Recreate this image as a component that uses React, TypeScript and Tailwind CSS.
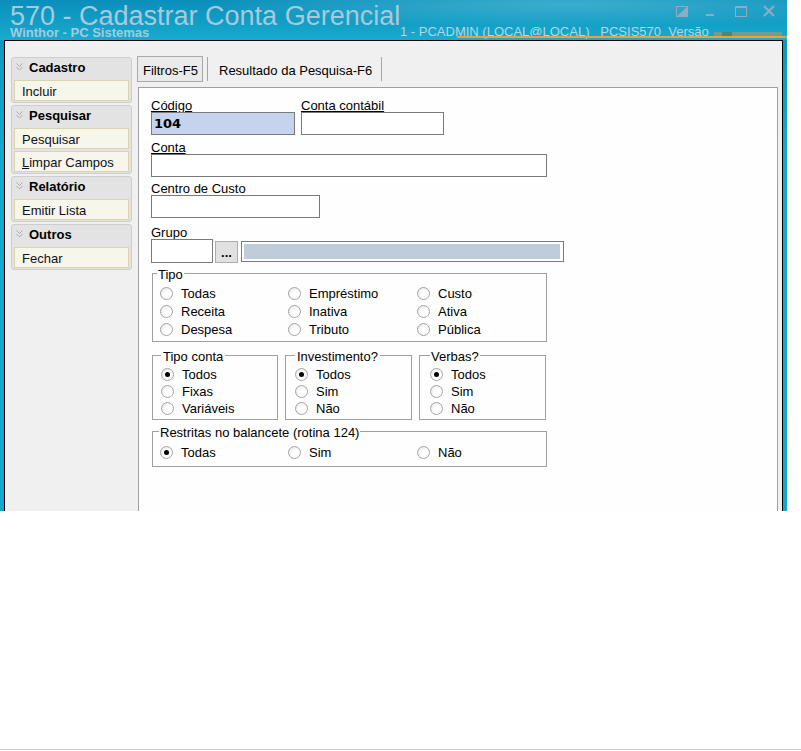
import type { ReactNode } from 'react'

// Window chrome + "Cadastrar Conta Gerencial" filter form (Winthor rotina 570)

const UI = "font-['Liberation_Sans',Arial,sans-serif]"

function Radio({ label, checked = false }: { label: string; checked?: boolean }) {
    return (
        <div className="flex items-center gap-[8px] h-full leading-[15px]">
            <span className="w-[13px] h-[13px] shrink-0 rounded-full border border-[#a4a4a4] bg-[radial-gradient(circle_at_65%_65%,#ffffff_35%,#e2e2e2_100%)] flex items-center justify-center">
                {checked && <span className="w-[5px] h-[5px] rounded-full bg-black" />}
            </span>
            <span className="whitespace-nowrap">{label}</span>
        </div>
    )
}

function GroupBox({
    title,
    className,
    legendClass,
    children,
}: {
    title: string
    className: string
    legendClass: string
    children: ReactNode
}) {
    return (
        <fieldset className={`border border-[#a0a0a0] ${className}`}>
            <legend className={`pt-[3px] leading-[14px] whitespace-nowrap ${legendClass}`}>{title}</legend>
            {children}
        </fieldset>
    )
}

function LabeledInput({
    label,
    width,
    underline = false,
    highlight = false,
    value,
    height = 'h-[23px]',
}: {
    label: string
    width: string
    underline?: boolean
    highlight?: boolean
    value?: string
    height?: string
}) {
    return (
        <div className="flex flex-col">
            <div className={`h-[13px] leading-[13px] overflow-hidden whitespace-nowrap ${underline ? 'underline underline-offset-[1px]' : ''}`}>
                {label}
            </div>
            <div
                className={`${width} ${height} border border-[#7a7a7a] flex items-center px-[2px] ${
                    highlight ? 'bg-[#c5d3ec]' : 'bg-white'
                }`}
            >
                {value && <span className="font-['DejaVu_Sans',Verdana,sans-serif] font-bold text-[13px]">{value}</span>}
            </div>
        </div>
    )
}

function Chevrons() {
    return (
        <svg width="7" height="8" viewBox="0 0 7 8" className="mt-[3px]">
            <path d="M0.5 0.5 L3.5 3.5 L6.5 0.5 M0.5 4 L3.5 7 L6.5 4" stroke="#ababab" strokeWidth="1" fill="none" />
        </svg>
    )
}

const menu: { title: string; items: ReactNode[] }[] = [
    { title: 'Cadastro', items: ['Incluir'] },
    {
        title: 'Pesquisar',
        items: [
            'Pesquisar',
            <>
                <span className="underline underline-offset-[1px]">L</span>impar Campos
            </>,
        ],
    },
    { title: 'Relatório', items: ['Emitir Lista'] },
    { title: 'Outros', items: ['Fechar'] },
]

function Sidebar() {
    return (
        <div className="ml-[6px] mt-[16px] w-[121px] flex flex-col gap-[2px]">
            {menu.map((section) => (
                <div key={section.title} className="rounded-[3px] border border-[#cdcdcd] bg-[#e3e3e3] pb-[1px]">
                    <div className="h-[22px] flex items-start gap-[6px] pl-[4px] pt-[2px] leading-[15px]">
                        <Chevrons />
                        <span className="font-bold">{section.title}</span>
                    </div>
                    <div className="flex flex-col gap-[2px] px-[2px]">
                        {section.items.map((item, i) => (
                            <div
                                key={i}
                                className="h-[21px] border border-[#d8d4ad] bg-[#f7f6eb] pl-[7px] flex items-center leading-[15px] pt-[1px] text-[#101020]"
                            >
                                {item}
                            </div>
                        ))}
                    </div>
                </div>
            ))}
        </div>
    )
}

function TitleBar() {
    return (
        <div className="h-[40px] flex bg-[radial-gradient(ellipse_at_72%_10%,rgba(150,225,240,0.35),transparent_45%),linear-gradient(180deg,#0b8fba_0%,#13a2c8_70%,#18accf_100%)]">
            <div className="w-[400px] pl-[10px] flex flex-col text-[#a7c9dc]">
                <div className="mt-[5px] text-[27px] leading-[22px] whitespace-nowrap">570 - Cadastrar Conta Gerencial</div>
                <div className="text-[13px] leading-[11px] font-bold whitespace-nowrap">Winthor - PC Sistemas</div>
            </div>
            <div className="flex-1 flex flex-col">
                <div className="h-[24px] flex items-start pt-[6px] pl-[276px]">
                    <svg width="12" height="11" viewBox="0 0 12 11">
                        <rect x="0.5" y="0.5" width="11" height="10" fill="none" stroke="#8eaebf" />
                        <path d="M11 1 L11 10 L1 10 Z" fill="#8eaebf" />
                    </svg>
                    <svg width="8" height="11" viewBox="0 0 8 11" className="ml-[18px]">
                        <rect x="0" y="8" width="8" height="2" fill="#8eaebf" />
                    </svg>
                    <svg width="12" height="11" viewBox="0 0 12 11" className="ml-[21px]">
                        <rect x="0.5" y="0.5" width="11" height="10" fill="none" stroke="#8eaebf" />
                        <rect x="0" y="0" width="12" height="2" fill="#8eaebf" />
                    </svg>
                    <svg width="12" height="12" viewBox="0 0 12 12" className="ml-[16px] -mt-[1px]">
                        <path d="M1 1 L11 11 M11 1 L1 11" stroke="#8eaebf" strokeWidth="2" />
                    </svg>
                </div>
                <div className="relative h-[15px] flex items-start text-[13px] leading-[15px] text-[#b3d5e5]">
                    <span className="whitespace-pre">1 - PCADMIN (LOCAL@LOCAL)   PCSIS570  Versão</span>
                    <div className="ml-[5px] mt-[8px] w-[68px] h-[5px] bg-[#6f9c93] flex">
                        <div className="ml-[8px] w-[10px] h-full bg-[#4f847a]" />
                    </div>
                    <div className="absolute left-[57px] right-0 bottom-[1px] h-[2px] bg-[#f2a22c]" />
                </div>
            </div>
        </div>
    )
}

function Tabs() {
    return (
        <div className="h-[26px] flex items-start">
            <div className="w-[66px] h-[26px] border border-[#a9a9a9] bg-[#eaeaea] pl-[5px] pt-[3px] flex items-center leading-[15px]">
                Filtros-F5
            </div>
            <div className="ml-[4px] mt-[1px] w-px h-[24px] bg-[#a6a6a6]" />
            <div className="pl-[11px] pr-[9px] h-[26px] pt-[3px] flex items-center leading-[15px] whitespace-nowrap">
                Resultado da Pesquisa-F6
            </div>
            <div className="mt-[1px] w-px h-[24px] bg-[#a6a6a6]" />
        </div>
    )
}

function FilterForm() {
    return (
        <div className="pt-[11px] flex flex-col items-start">
            <div className="flex gap-[6px]">
                <LabeledInput label="Código" width="w-[144px]" underline highlight value="104" />
                <LabeledInput label="Conta contábil" width="w-[143px]" underline />
            </div>
            <div className="mt-[6px]">
                <LabeledInput label="Conta" width="w-[396px]" underline />
            </div>
            <div className="mt-[5px]">
                <LabeledInput label="Centro de Custo" width="w-[169px]" />
            </div>

            {/* Grupo: código + botão de busca + descrição */}
            <div className="mt-[8px] flex flex-col">
                <div className="h-[13px] leading-[13px]">Grupo</div>
                <div className="flex items-start">
                    <div className="w-[62px] h-[24px] border border-[#7a7a7a] bg-white" />
                    <div className="ml-[2px] mt-[2px] w-[23px] h-[22px] border border-[#adadad] bg-[#e1e1e1] flex items-end justify-center font-bold leading-[15px] pb-[2px]">
                        ...
                    </div>
                    <div className="ml-[3px] mt-[2px] w-[323px] h-[21px] border border-[#7a7a7a] bg-white p-[2px] pr-[3px]">
                        <div className="w-full h-full bg-[#bfcddb]" />
                    </div>
                </div>
            </div>

            <GroupBox title="Tipo" className="mt-[2px] ml-[1px] w-[395px] pl-[7px] pt-[2px] pb-[3px]" legendClass="-ml-[3px] px-[1px]">
                <div className="grid grid-cols-[128px_129px_1fr] auto-rows-[18px]">
                    <Radio label="Todas" />
                    <Radio label="Empréstimo" />
                    <Radio label="Custo" />
                    <Radio label="Receita" />
                    <Radio label="Inativa" />
                    <Radio label="Ativa" />
                    <Radio label="Despesa" />
                    <Radio label="Tributo" />
                    <Radio label="Pública" />
                </div>
            </GroupBox>

            <div className="mt-[5px] ml-[1px] flex gap-[7px]">
                <GroupBox title="Tipo conta" className="w-[126px] pl-[8px] pt-[2px] pb-[2px]" legendClass="px-[2px]">
                    <div className="flex flex-col">
                        <div className="h-[17px]"><Radio label="Todos" checked /></div>
                        <div className="h-[17px]"><Radio label="Fixas" /></div>
                        <div className="h-[17px]"><Radio label="Variáveis" /></div>
                    </div>
                </GroupBox>
                <GroupBox title="Investimento?" className="w-[127px] pl-[9px] pt-[2px] pb-[2px]" legendClass="px-[2px]">
                    <div className="flex flex-col">
                        <div className="h-[17px]"><Radio label="Todos" checked /></div>
                        <div className="h-[17px]"><Radio label="Sim" /></div>
                        <div className="h-[17px]"><Radio label="Não" /></div>
                    </div>
                </GroupBox>
                <GroupBox title="Verbas?" className="w-[127px] pl-[10px] pt-[2px] pb-[2px]" legendClass="px-[1px]">
                    <div className="flex flex-col">
                        <div className="h-[17px]"><Radio label="Todos" checked /></div>
                        <div className="h-[17px]"><Radio label="Sim" /></div>
                        <div className="h-[17px]"><Radio label="Não" /></div>
                    </div>
                </GroupBox>
            </div>

            <GroupBox
                title="Restritas no balancete (rotina 124)"
                className="mt-[3px] ml-[1px] w-[395px] pl-[7px] pt-[4px] pb-[5px]"
                legendClass="-ml-[1px] px-[1px]"
            >
                <div className="grid grid-cols-[128px_129px_1fr] auto-rows-[17px]">
                    <Radio label="Todas" checked />
                    <Radio label="Sim" />
                    <Radio label="Não" />
                </div>
            </GroupBox>
        </div>
    )
}

export default function App() {
    return (
        <div className={`w-[801px] h-[751px] bg-white flex flex-col text-[13px] text-black ${UI}`}>
            <div className="w-[787px] h-[511px] shrink-0 flex flex-col bg-[linear-gradient(180deg,#0c92bc_0%,#14a8cc_30%,#12a9ce_100%)]">
                <TitleBar />
                <div className="mx-[4px] flex-1 min-h-0 flex border border-b-0 border-black bg-[#eff0ef]">
                    <Sidebar />
                    <div className="ml-[5px] mr-[4px] flex-1 flex flex-col pt-[15px]">
                        <Tabs />
                        <div className="mt-[5px] ml-[1px] flex-1 bg-[#fefefe] border border-b-0 border-[#a0a0a0] pl-[12px]">
                            <FilterForm />
                        </div>
                    </div>
                </div>
            </div>
            <div className="mt-auto mb-[1px] h-px bg-[#cfcfcf]" />
        </div>
    )
}
